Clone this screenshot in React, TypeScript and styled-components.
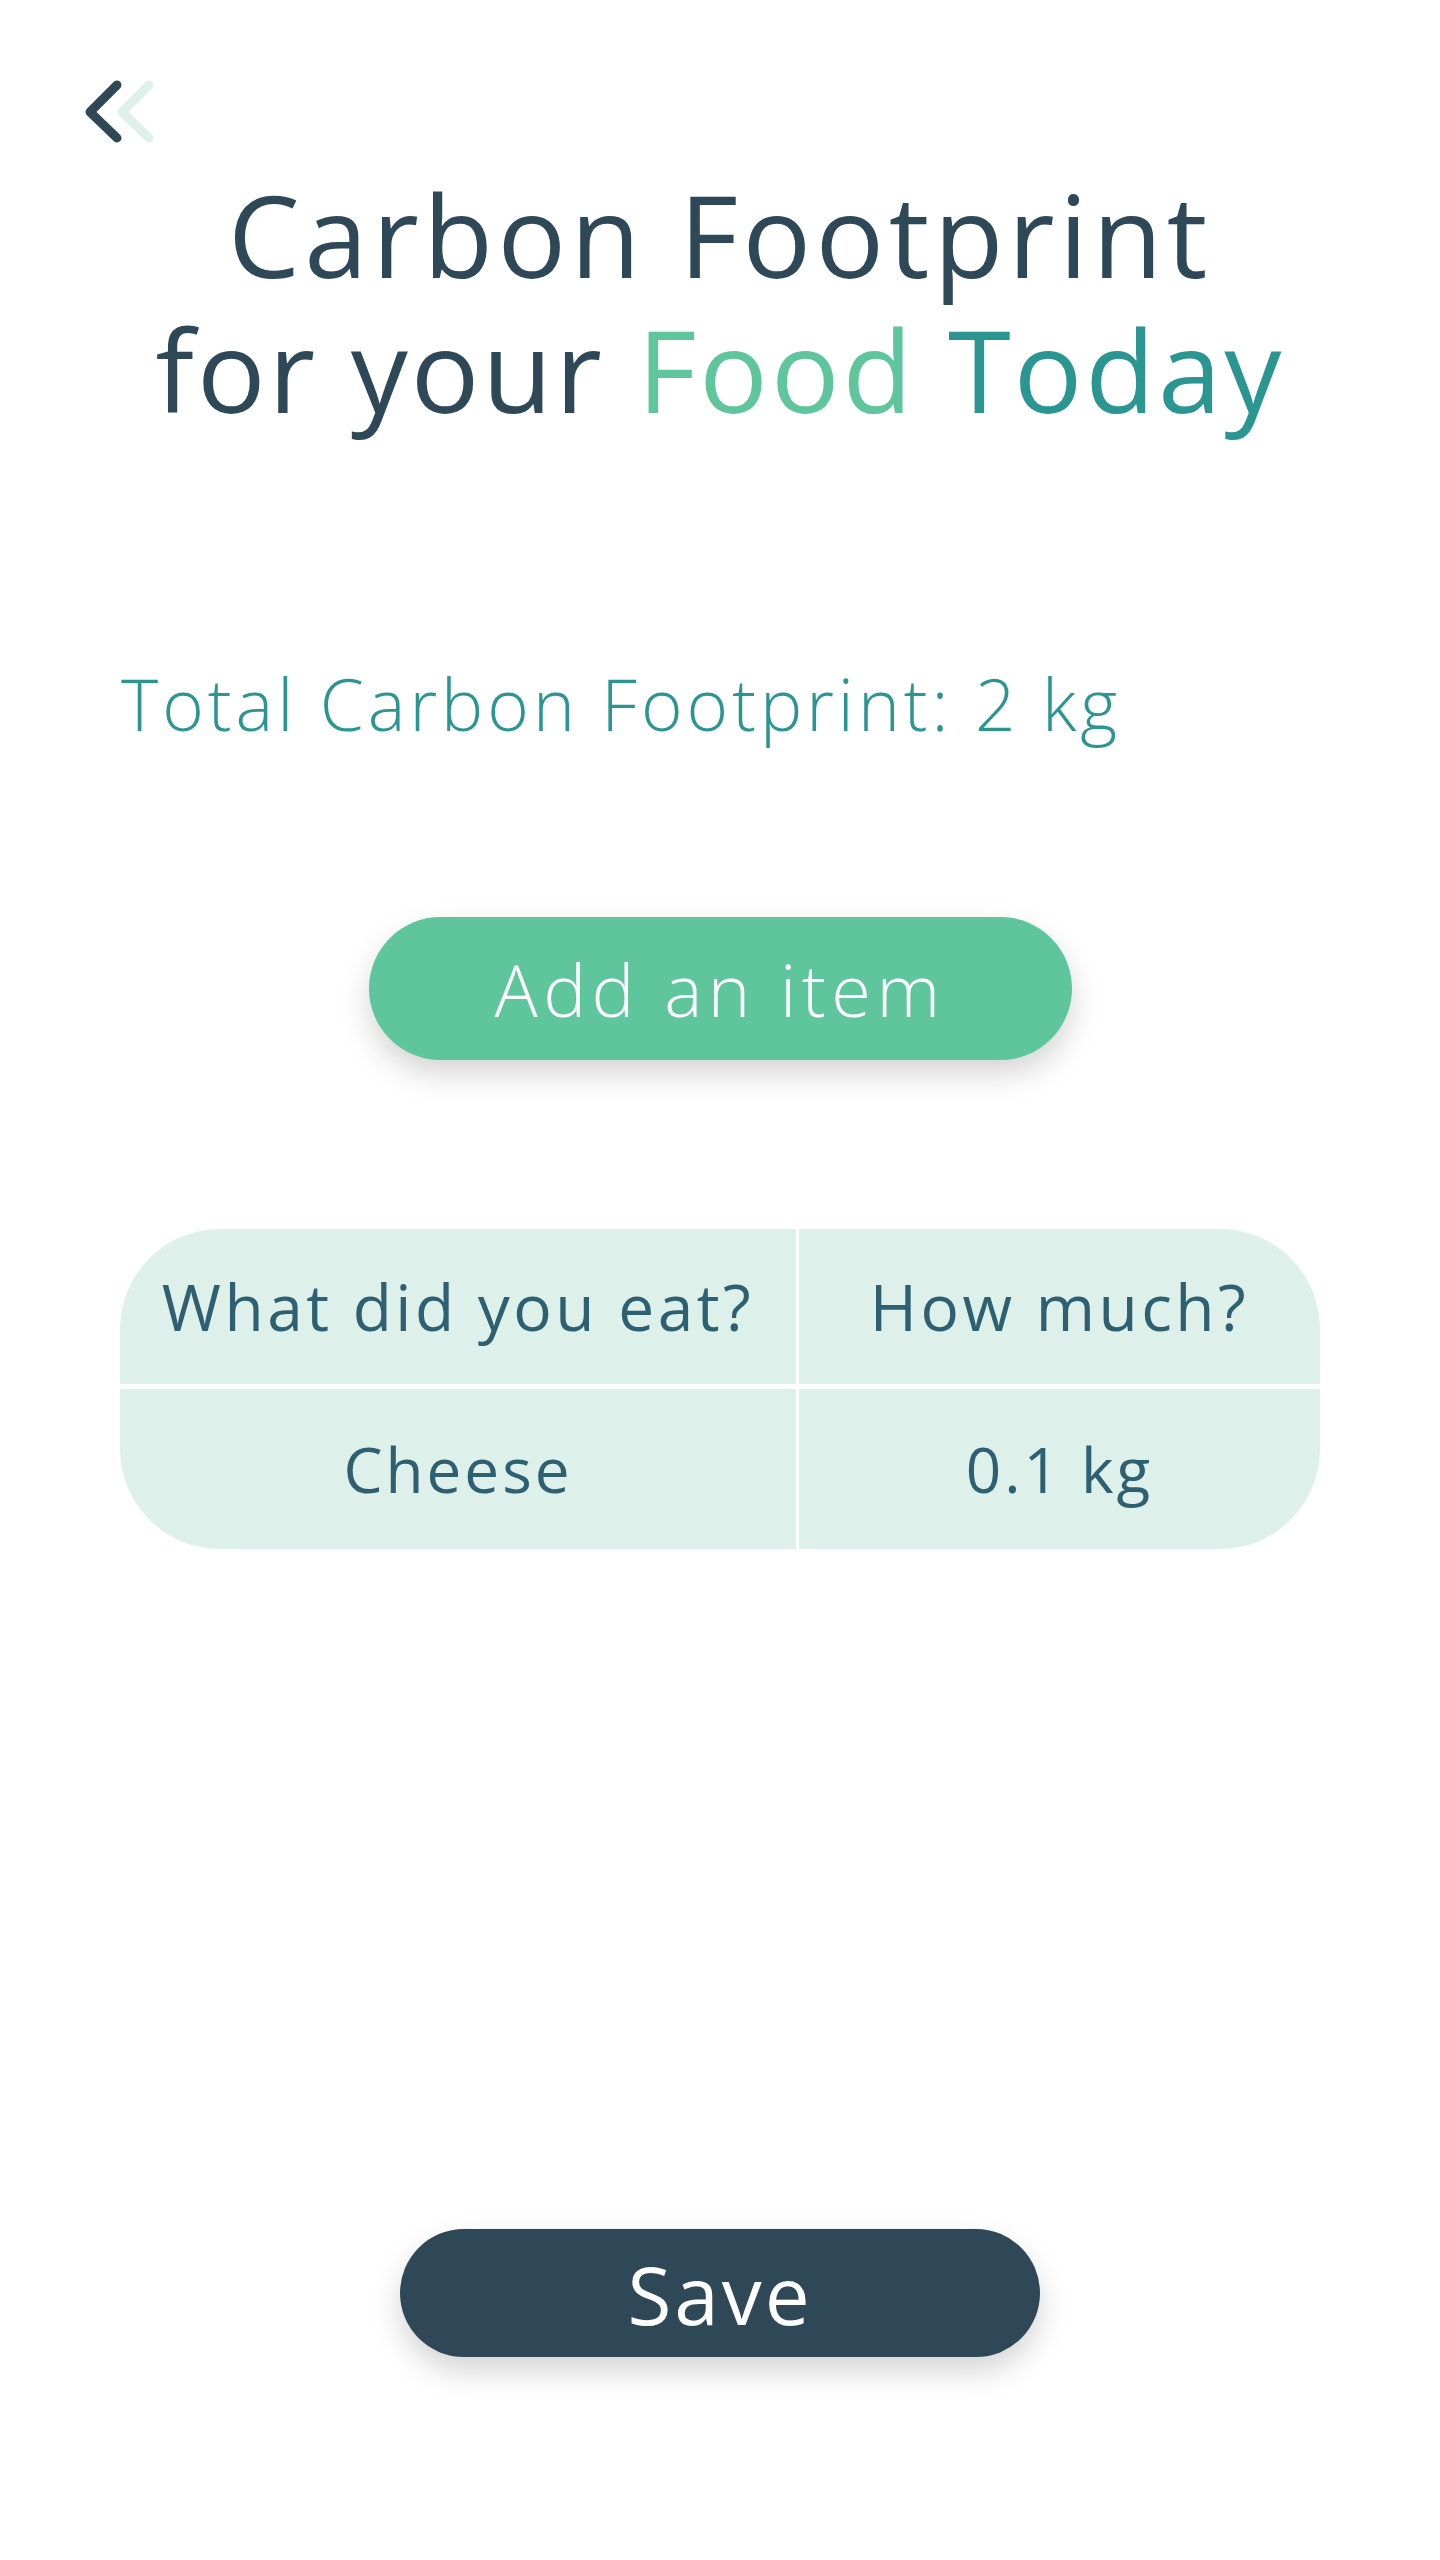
import styled, { createGlobalStyle } from "styled-components";

const GlobalStyle = createGlobalStyle`
  html, body {
    margin: 0;
    padding: 0;
    background: #ffffff;
  }
  body {
    font-family: "Open Sans", "Noto Sans", "DejaVu Sans", sans-serif;
  }
`;

const colors = {
  dark: "#2f4858",
  green: "#5ec59c",
  teal: "#2a9591",
  mint: "#ddf1ea",
  tableText: "#2e6072",
};

const StyledPage = styled.div`
  width: 1440px;
  min-height: 2560px;
  display: flex;
  flex-direction: column;
  box-sizing: border-box;
  padding-top: 78px;
`;

const StyledBackButton = styled.button`
  align-self: flex-start;
  margin-left: 80px;
  padding: 0;
  border: none;
  background: none;
  cursor: pointer;
  display: flex;
  width: 80px;
  height: 68px;
`;

const StyledTitle = styled.h1`
  margin: 20px 0 0;
  text-align: center;
  font-size: 114px;
  line-height: 135px;
  font-weight: 500;
  letter-spacing: 3.5px;
  color: ${colors.dark};
`;

const StyledTitleLine = styled.span<{ $first?: boolean }>`
  display: block;
  height: 135px;
  letter-spacing: ${(p) => (p.$first ? 4.5 : 3)}px;
`;

const StyledAccent = styled.span<{ $color: string }>`
  display: inline-block;
  color: ${(p) => p.$color};
`;

const StyledTotal = styled.p`
  margin: 225px 0 0 121px;
  font-size: 71px;
  line-height: 85px;
  font-weight: 300;
  letter-spacing: 4px;
  color: ${colors.teal};
`;

const StyledPillButton = styled.button<{ $bg: string; $w: number; $h: number }>`
  align-self: center;
  width: ${(p) => p.$w}px;
  height: ${(p) => p.$h}px;
  border: none;
  border-radius: 999px;
  background: ${(p) => p.$bg};
  color: #ffffff;
  font-family: inherit;
  cursor: pointer;
  box-shadow: 0 14px 30px rgba(0, 0, 0, 0.17);
  display: flex;
  align-items: center;
  justify-content: center;
`;

const StyledAddButton = styled(StyledPillButton)`
  margin-top: 171px;
  font-size: 72px;
  font-weight: 300;
  letter-spacing: 5.5px;
`;

const StyledSaveButton = styled(StyledPillButton)`
  margin-top: 680px;
  font-size: 80px;
  font-weight: 400;
  letter-spacing: 3px;
`;

const StyledTable = styled.div`
  align-self: center;
  margin-top: 169px;
  width: 1200px;
  display: grid;
  grid-template-columns: 676px 1fr;
  grid-template-rows: 155px 160px;
  gap: 5px 3px;
  background: #ffffff;
`;

const StyledCell = styled.div<{ $corner?: string; $head?: boolean }>`
  background: ${colors.mint};
  display: flex;
  align-items: center;
  justify-content: center;
  color: ${colors.tableText};
  font-size: ${(p) => (p.$head ? 64 : 62)}px;
  font-weight: ${(p) => (p.$head ? 500 : 400)};
  letter-spacing: ${(p) => (p.$head ? 3.5 : 3)}px;
  border-radius: ${(p) => p.$corner || "0"};
`;

const BackIcon = () => (
  <svg width="80" height="68" viewBox="0 0 80 68" fill="none">
    <polyline
      points="69,7 42,34 69,60"
      stroke={colors.mint}
      strokeWidth="9"
      strokeLinecap="round"
      strokeLinejoin="round"
    />
    <polyline
      points="37,7 10,34 37,60"
      stroke={colors.dark}
      strokeWidth="9"
      strokeLinecap="round"
      strokeLinejoin="round"
    />
  </svg>
);

const R = "100px";

export default function App() {
  return (
    <>
      <GlobalStyle />
      <StyledPage>
        <StyledBackButton aria-label='Back'>
          <BackIcon />
        </StyledBackButton>

        <StyledTitle>
          <StyledTitleLine $first>Carbon Footprint</StyledTitleLine>
          <StyledTitleLine>
            for your <StyledAccent $color={colors.green}>Food</StyledAccent>{" "}
            <StyledAccent $color={colors.teal}>Today</StyledAccent>
          </StyledTitleLine>
        </StyledTitle>

        <StyledTotal>Total Carbon Footprint: 2 kg</StyledTotal>

        <StyledAddButton $bg={colors.green} $w={703} $h={143}>
          Add an item
        </StyledAddButton>

        <StyledTable>
          <StyledCell $head $corner={`${R} 0 0 0`}>
            What did you eat?
          </StyledCell>
          <StyledCell $head $corner={`0 ${R} 0 0`}>
            How much?
          </StyledCell>
          <StyledCell $corner={`0 0 0 ${R}`}>Cheese</StyledCell>
          <StyledCell $corner={`0 0 ${R} 0`}>0.1 kg</StyledCell>
        </StyledTable>

        <StyledSaveButton $bg={colors.dark} $w={640} $h={128}>
          Save
        </StyledSaveButton>
      </StyledPage>
    </>
  );
}
